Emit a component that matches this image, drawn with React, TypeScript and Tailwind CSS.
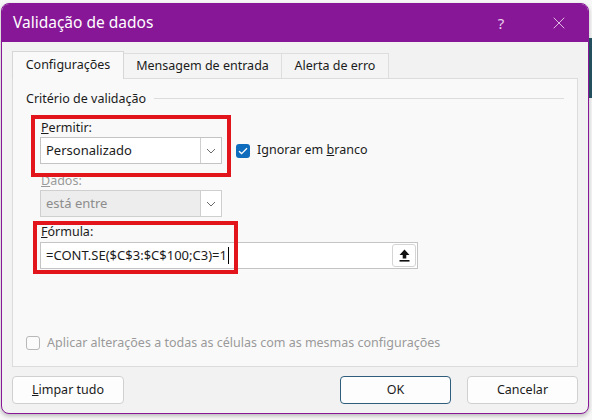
import { X } from 'lucide-react';

const font = "font-['Segoe_UI','Noto_Sans',sans-serif]";

function Chevron() {
  return (
    <svg width="10" height="6" viewBox="0 0 10 6" fill="none">
      <path d="M1 1l4 4 4-4" stroke="#6b6b6b" strokeWidth="1" />
    </svg>
  );
}

function SelectBox({ value, disabled }: { value: string; disabled?: boolean }) {
  return (
    <div
      className={`flex h-[27px] w-[182px] items-stretch border text-[13px] ${
        disabled ? 'border-[#cfcfcf] bg-[#ededed] text-[#8c8c8c]' : 'border-[#c4c4c4] bg-white text-[#1b1b1b]'
      }`}>
      <div className="flex flex-1 items-center pl-[5px]">{value}</div>
      <div className="flex w-[21px] items-center justify-center border-l border-[#cfcfcf] bg-white">
        <Chevron />
      </div>
    </div>
  );
}

export default function App() {
  return (
    <div className={`flex h-[420px] w-[592px] bg-[#f7f7f7] pt-[3px] pl-[1px] text-[12.5px] ${font}`}>
      <div className="flex h-[411px] w-[588px] flex-col overflow-hidden rounded-[8px] border border-[#881798] bg-[#f2f2f2] shadow-[0_2px_4px_rgba(0,0,0,0.25)]">
        <div className="flex h-[38px] shrink-0 items-center bg-[#881798] pl-[11px] pr-[6px] text-white">
          <span className="text-[15.5px]">Validação de dados</span>
          <span className="ml-auto mr-[12px] flex w-[46px] justify-center text-[15px] text-[#e9d3ec]">?</span>
          <span className="flex w-[46px] justify-center">
            <X size={20} strokeWidth={1} color="#f0dcf2" />
          </span>
        </div>

        <div className="flex flex-1 flex-col px-[10px] pt-[9px]">
          <div className="relative z-10 flex items-end">
            <div className="-mb-px flex h-[28px] w-[112px] items-center justify-center border border-b-0 border-[#d6d6d6] bg-[#f9f9f9] text-[#1b1b1b]">
              Configurações
            </div>
            <div className="flex h-[25px] w-[158px] items-center justify-center border-t border-r border-[#dedede] bg-[#f4f4f4] text-[#1b1b1b]">
              Mensagem de entrada
            </div>
            <div className="flex h-[25px] w-[107px] items-center justify-center border-t border-r border-[#dedede] bg-[#f4f4f4] text-[#1b1b1b]">
              Alerta de erro
            </div>
          </div>

          <div className="relative flex h-[289px] flex-col border border-[#dcdcdc] bg-[#f9f9f9] px-[13px] pt-[11px] pb-[15px] text-[#1b1b1b]">
            <div className="flex items-center leading-[17px]">
              <span>Critério de validação</span>
              <div className="ml-[8px] h-px flex-1 bg-[#dcdcdc]" />
            </div>

            <div className="flex flex-col pl-[14px]">
              <div className="flex items-end">
                <div className="flex flex-col">
                  <span className="mt-[12px] pl-px leading-[17px]">
                    <span className="underline">P</span>ermitir:
                  </span>
                  <div className="mt-px">
                    <SelectBox value="Personalizado" />
                  </div>
                </div>
                <div className="ml-[14px] flex h-[27px] items-center">
                  <div className="flex h-[14px] w-[14px] items-center justify-center rounded-[3px] bg-[#0f6cbd]">
                    <svg width="10" height="8" viewBox="0 0 10 8" fill="none">
                      <path d="M1 4.2l2.6 2.4L9 1.2" stroke="white" strokeWidth="1.3" />
                    </svg>
                  </div>
                  <span className="ml-[7px]">
                    Ignorar em <span className="underline">b</span>ranco
                  </span>
                </div>
              </div>

              <span className="mt-[8px] pl-px leading-[17px] text-[#9a9a9a]">
                <span className="underline">D</span>ados:
              </span>
              <div className="mt-px">
                <SelectBox value="está entre" disabled />
              </div>

              <span className="mt-[6px] pl-px leading-[17px]">
                <span className="underline">F</span>órmula:
              </span>
              <div className="mt-[2px] flex h-[27px] w-[378px] items-stretch border border-[#c4c4c4] bg-white text-[13px]">
                <div className="flex flex-1 items-center pl-[5px]">
                  <span>=CONT.SE($C$3:$C$100;C3)=1</span>
                  <span className="ml-px h-[17px] w-px bg-black" />
                </div>
                <div className="my-[1px] mr-[1px] flex w-[24px] items-center justify-center rounded-[3px] border border-[#d4d4d4] bg-white">
                  <svg width="11" height="13" viewBox="0 0 11 13" fill="#111">
                    <path d="M5.5 0.5L10.5 6H7.3v3.5H3.7V6H0.5z" />
                    <rect x="0.5" y="11" width="10" height="1.6" />
                  </svg>
                </div>
              </div>
            </div>

            <div className="mt-auto flex items-center leading-[17px] text-[#9a9a9a]">
              <div className="h-[14px] w-[14px] rounded-[3px] border border-[#b8b8b8] bg-[#fbfbfb]" />
              <span className="ml-[7px]">Aplicar alterações a todas as células com as mesmas configurações</span>
            </div>

            <div className="pointer-events-none absolute left-[18px] top-[36px] h-[62px] w-[200px] border-[4px] border-[#e3151c]" />
            <div className="pointer-events-none absolute left-[20px] top-[142px] h-[53px] w-[205px] border-[4px] border-[#e3151c]" />
          </div>

          <div className="mt-[9px] flex items-center text-[#1b1b1b]">
            <button className="flex h-[28px] w-[112px] items-center justify-center rounded-[4px] border border-[#d0d0d0] bg-[#fdfdfd]">
              <span>
                <span className="underline">L</span>impar tudo
              </span>
            </button>
            <button className="ml-auto flex h-[28px] w-[111px] items-center justify-center rounded-[4px] border border-[#2f5d7c] bg-[#fdfdfd]">
              OK
            </button>
            <button className="ml-[16px] flex h-[28px] w-[111px] items-center justify-center rounded-[4px] border border-[#d0d0d0] bg-[#fdfdfd]">
              Cancelar
            </button>
          </div>
        </div>
      </div>
      <div className="mt-[35px] h-[60px] w-[3px] bg-[#244f5e]" />
    </div>
  );
}
